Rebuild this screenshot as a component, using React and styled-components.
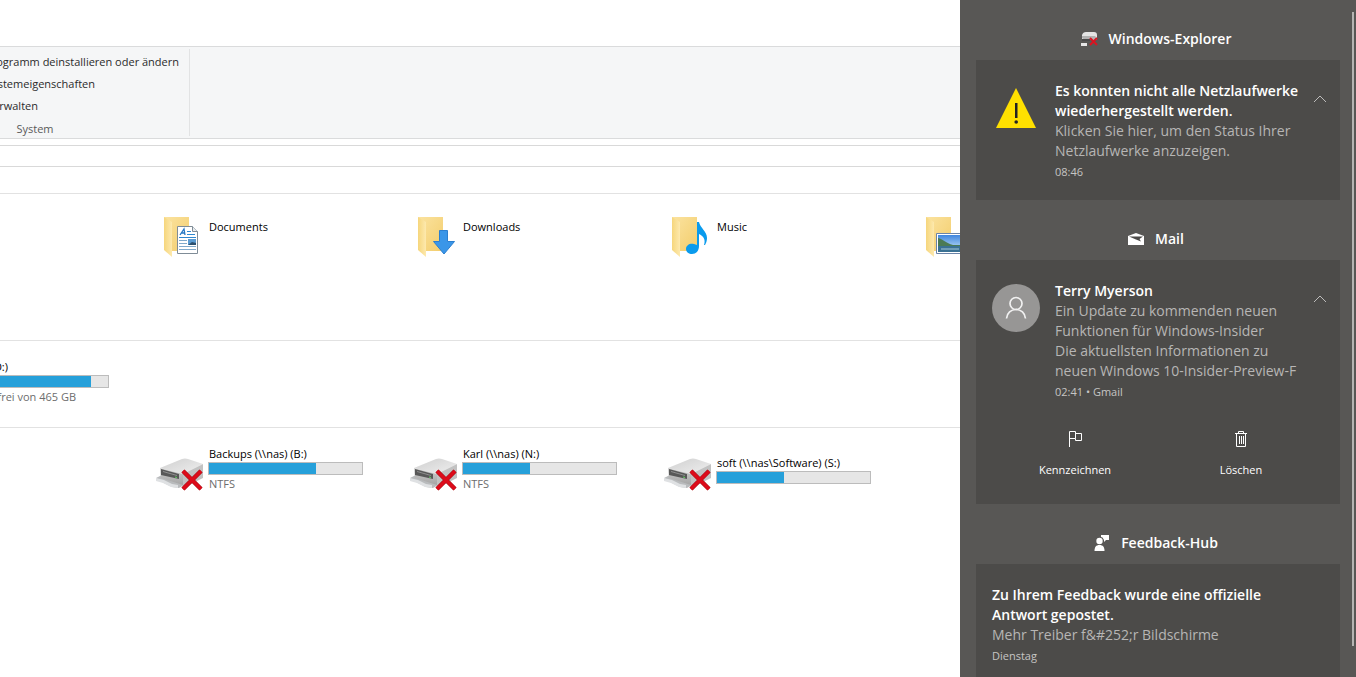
import React from 'react';
import styled, { createGlobalStyle } from 'styled-components';

const GlobalStyle = createGlobalStyle`
  * {
    box-sizing: border-box;
  }

  body {
    margin: 0;
    font-family: 'Open Sans', 'Noto Sans', sans-serif;
    font-size: 11px;
    color: #000;
    background: #fff;
  }

  h2, h3, p, ul {
    margin: 0;
    padding: 0;
    font: inherit;
    list-style: none;
  }

  svg {
    display: block;
    flex: none;
  }
`;

const Desktop = styled.div`
  display: flex;
  height: 100vh;
  overflow: hidden;
`;

/* ---------- Explorer ---------- */

const Explorer = styled.main`
  flex: 1;
  min-width: 0;
  overflow: hidden;
  background: #fff;
`;

const TabStrip = styled.div`
  height: 46px;
`;

const Ribbon = styled.div`
  height: 93px;
  padding: 2px 0;
  background: #f5f6f7;
  border-top: 1px solid #dadbdc;
  border-bottom: 1px solid #dadbdc;
`;

const RibbonGroup = styled.section`
  display: flex;
  flex-direction: column;
  width: 190px;
  height: 87px;
  padding-top: 2px;
  border-right: 1px solid #e2e3e4;
  overflow: hidden;
`;

const RibbonButton = styled.button`
  display: flex;
  justify-content: flex-end;
  width: ${(props) => props.$width}px;
  height: 22px;
  padding: 0;
  border: none;
  background: none;
  font: inherit;
  line-height: 22px;
  white-space: nowrap;
  color: #2b2b2b;
  cursor: pointer;
`;

const RibbonLabel = styled.h2`
  width: 70px;
  line-height: 24px;
  text-align: center;
  color: #5a5a5a;
`;

const AddressBar = styled.div`
  height: 22px;
  margin-top: 6px;
  border-top: 1px solid #d9d9d9;
  border-bottom: 1px solid #d9d9d9;
`;

const Content = styled.div`
  margin-top: 26px;
`;

const Group = styled.section`
  height: ${(props) => props.$height}px;
  padding-top: 16px;
  border-top: 1px solid #e2e2e2;
`;

const TileGrid = styled.ul`
  display: grid;
  grid-template-columns: 156px repeat(4, 254px);
`;

const Tile = styled.li`
  display: flex;
  align-items: ${(props) => (props.$drive ? 'center' : 'flex-start')};
  justify-content: ${(props) => (props.$cut ? 'flex-end' : 'flex-start')};
  gap: ${(props) => (props.$drive ? 2 : 3)}px;
  height: 50px;
  padding-right: ${(props) => (props.$cut ? 47 : 0)}px;
  white-space: nowrap;
`;

const TileName = styled.span`
  padding-top: 9px;
  line-height: 16px;
`;

const DriveInfo = styled.div`
  display: flex;
  flex-direction: column;
  flex: none;
  width: 155px;
`;

const DriveText = styled.div`
  padding: 0 ${(props) => props.$inset || 0}px 0 1px;
  text-align: ${(props) => (props.$inset ? 'right' : 'left')};
  line-height: ${(props) => (props.$muted ? 18 : 16)}px;
  color: ${(props) => (props.$muted ? '#6d6d6d' : '#000')};
`;

const CapacityBar = styled.div`
  height: 13px;
  border: 1px solid #bcbcbc;
  background: #e6e6e6;
`;

const CapacityFill = styled.div`
  height: 100%;
  background: #26a0da;
`;

/* ---------- Action center ---------- */

const ActionCenter = styled.aside`
  position: relative;
  display: flex;
  flex-direction: column;
  flex: none;
  width: 396px;
  padding: 0 16px;
  background: #585755;
  color: #fff;
  overflow: hidden;
`;

const ScrollThumb = styled.div`
  position: absolute;
  top: 12px;
  right: 2px;
  bottom: 31px;
  width: 2px;
  background: #b5b4b2;
`;

const AppHeader = styled.h2`
  display: flex;
  align-items: center;
  justify-content: center;
  flex: none;
  gap: 11px;
  height: 60px;
  padding: 18px 4px 0 0;
  font-size: 14px;
  font-weight: 600;
  line-height: 20px;
`;

const Card = styled.article`
  flex: ${(props) => (props.$last ? '1 0 auto' : 'none')};
  padding: 21px 14px ${(props) => props.$bottom}px 16px;
  background: #4c4b49;
`;

const CardRow = styled.div`
  display: flex;
  align-items: flex-start;
`;

const Picture = styled.div`
  display: flex;
  justify-content: center;
  width: 48px;
  margin: 3px 15px 0 0;
`;

const Message = styled.div`
  flex: 1;
  min-width: 0;
  font-size: 14px;
  line-height: 20px;
  white-space: pre;
`;

const Title = styled.h3`
  font-weight: 600;
`;

const Body = styled.p`
  color: #b7b6b5;
`;

const Meta = styled.p`
  padding-top: 1px;
  font-size: 11px;
  color: #c6c5c4;
`;

const CollapseButton = styled.button`
  display: flex;
  padding: 14px 0 0;
  border: none;
  background: none;
  color: #bdbcbb;
  cursor: pointer;
`;

const Actions = styled.div`
  display: grid;
  grid-template-columns: 1fr 1fr;
  padding: 29px 2px 0 0;
`;

const ActionButton = styled.button`
  display: flex;
  flex-direction: column;
  align-items: center;
  gap: 15px;
  padding: 0;
  border: none;
  background: none;
  font: inherit;
  line-height: 16px;
  color: #fff;
  cursor: pointer;
`;

/* ---------- Icons ---------- */

function FolderIcon({ kind }) {
  return (
    <svg width="50" height="50" viewBox="0 0 50 50">
      <defs>
        <linearGradient id="folderBack" x1="0" y1="0" x2="1" y2="1">
          <stop offset="0" stopColor="#fbe3a0" />
          <stop offset="1" stopColor="#f3cd6c" />
        </linearGradient>
        <linearGradient id="folderFront" x1="0" y1="0" x2="1" y2="0">
          <stop offset="0" stopColor="#f6d67c" />
          <stop offset="1" stopColor="#fde9ae" />
        </linearGradient>
        <linearGradient id="sky" x1="0" y1="0" x2="0" y2="1">
          <stop offset="0" stopColor="#3f86df" />
          <stop offset="1" stopColor="#d3ebf8" />
        </linearGradient>
      </defs>
      <path d="M8 7h25v34H16z" fill="url(#folderBack)" />
      <path d="M8 7l8 5v35l-8-7z" fill="url(#folderFront)" />
      {kind === 'documents' && (
        <g>
          <path d="M21.500 16.500h15l5 5v22h-20z" fill="#fff" stroke="#7f8c97" />
          <path d="M36.500 16.500v5h5" fill="#e8ecef" stroke="#7f8c97" />
          <path d="M24 25l4-6 1 6M25.500 23h3" fill="none" stroke="#2477c4" strokeWidth="1.300" />
          <path d="M31 21.500h4M31 24.500h8M23 27.500h17" stroke="#2f87cf" />
          <path d="M23 30.500h8M23 33.500h8M23 36.500h17M23 39.500h17" stroke="#7fa9cb" />
          <path d="M32 29h8v6h-8z" fill="#5a9bd2" />
          <path d="M32 35l4-3 4 1v2z" fill="#2c506f" />
        </g>
      )}
      {kind === 'downloads' && (
        <path d="M29.500 20.500h8v11h7L34 44 23.500 31.500h6z" fill="#3a96e8" stroke="#2b7fd0" />
      )}
      {kind === 'music' && (
        <path
          d="M33 12h2c1 6 8 9 8 16 0 3-1 5-2 7h-1c2-6-1-9-5-11v12c0 5-3 8-7 8-3 0-6-2-6-5 0-4 4-6 8-5l3 1z"
          fill="#0a9bed"
        />
      )}
      {kind === 'pictures' && (
        <g>
          <path d="M18.500 23.500h29v20h-29z" fill="#fff" stroke="#6b84a8" />
          <path d="M20 25h26v17H20z" fill="url(#sky)" />
          <path d="M20 28c5 1 8 5 15 7h11v2H20z" fill="#4b7a55" />
          <path d="M20 36h26v6H20z" fill="#3a7193" />
          <path d="M23 39h18" stroke="#a6c9da" />
        </g>
      )}
    </svg>
  );
}

function NetDriveIcon() {
  return (
    <svg width="50" height="50" viewBox="0 0 50 50">
      <defs>
        <linearGradient id="driveTop" x1="0" y1="0" x2="1" y2="1">
          <stop offset="0" stopColor="#cfcfcf" />
          <stop offset="1" stopColor="#f0f0f0" />
        </linearGradient>
        <linearGradient id="driveFace" x1="0" y1="0" x2="0" y2="1">
          <stop offset="0" stopColor="#cfcfcf" />
          <stop offset="1" stopColor="#a4a4a4" />
        </linearGradient>
      </defs>
      <path d="M0 34l6-3 16 6 6 4-5 3-7-1-8-4z" fill="#b9bbbd" />
      <path d="M0 34l8 2 8 4 6 1v3l-7-1-8-4-7-2z" fill="#dfe1e3" />
      <path d="M4 24l22-9q3-1 6 0l15 5-20 10z" fill="url(#driveTop)" />
      <path d="M27 30l20-10v14L27 44z" fill="#c2c2c2" />
      <path d="M4 24l23 6v11L5 34z" fill="url(#driveFace)" />
      <path d="M5 25l18 5v5L5 31z" fill="#585858" />
      <path d="M7 27.500l14 4" stroke="#8e8e8e" />
      <path d="M19 33l2 .500" stroke="#5fd35f" />
      <path d="M27 27l18 18M45 27L27 45" stroke="#a30d16" strokeWidth="4.500" />
      <path d="M27 27l18 18M45 27L27 45" stroke="#dd0b1a" strokeWidth="3.200" />
    </svg>
  );
}

function SmallDriveIcon() {
  return (
    <svg width="17" height="16" viewBox="0 0 17 16">
      <path d="M1 4q1-3 4-3h8q3 0 3 3v5H9V8H1z" fill="#e4e4e4" />
      <path d="M1 5h13l2 2v2H4L1 7z" fill="#b2b2b2" />
      <path d="M1 8h8v2H1z" fill="#4a4a4a" />
      <path d="M0 12h6v3H0z" fill="#e6e6e6" />
      <path d="M9 7l7 7M16 7l-7 7" stroke="#d81421" strokeWidth="2" />
    </svg>
  );
}

function MailIcon() {
  return (
    <svg width="16" height="16" viewBox="0 0 16 16">
      <path d="M0 5l8-3 8 3v9H0z" fill="#fff" />
      <path d="M1 5.500h14L11.500 8l1.500 2.500L8 8.500z" fill="#4c4b49" />
    </svg>
  );
}

function FeedbackIcon() {
  return (
    <svg width="16" height="18" viewBox="0 0 16 18">
      <circle cx="5.500" cy="7" r="3.200" fill="#fff" />
      <path d="M.5 17c0-4 1.500-6 5-6s5 2 5 6z" fill="#fff" />
      <path d="M7 1h8v5h-3l-2 2V6L8.500 3.500 7 3z" fill="#fff" />
    </svg>
  );
}

function WarningIcon() {
  return (
    <svg width="40" height="48" viewBox="0 0 40 48">
      <path d="M20 4l20 40H0z" fill="#ffe000" />
      <path d="M19 19h2.500v15H19z" fill="#222" />
      <circle cx="20.200" cy="38" r="1.800" fill="#222" />
    </svg>
  );
}

function AvatarIcon() {
  return (
    <svg width="48" height="48" viewBox="0 0 48 48">
      <circle cx="24" cy="24" r="24" fill="#979695" />
      <g fill="none" stroke="#f1f1f1" strokeWidth="1.700">
        <circle cx="24" cy="19.500" r="6" />
        <path d="M14.500 34.500c.5-5.500 4.500-9 9.500-9s9 3.500 9.500 9" />
      </g>
    </svg>
  );
}

function ChevronIcon() {
  return (
    <svg width="12" height="8" viewBox="0 0 12 8">
      <path d="M0 7l6-6 6 6" fill="none" stroke="currentColor" />
    </svg>
  );
}

function FlagIcon() {
  return (
    <svg width="16" height="16" viewBox="0 0 16 16">
      <path d="M2.500 16V.5h6v7h-6M8.500 2.500h6v7h-6v-2" fill="none" stroke="#fff" />
    </svg>
  );
}

function TrashIcon() {
  return (
    <svg width="16" height="16" viewBox="0 0 16 16">
      <path
        d="M2 2.500h12M5.500 2.500v-2h5v2M3.500 2.500v13h9v-13M6.500 5v8M8.500 5v8M10.500 5v8"
        fill="none"
        stroke="#fff"
      />
    </svg>
  );
}

/* ---------- Data ---------- */

const ribbonCommands = [
  { label: 'ogramm deinstallieren oder ändern', width: 179 },
  { label: 'stemeigenschaften', width: 95 },
  { label: 'rwalten', width: 38 },
];

const folders = [
  { name: 'Documents', kind: 'documents' },
  { name: 'Downloads', kind: 'downloads' },
  { name: 'Music', kind: 'music' },
  { name: '', kind: 'pictures' },
];

const netDrives = [
  { name: 'Backups (\\\\nas) (B:)', used: 70, fs: 'NTFS' },
  { name: 'Karl (\\\\nas) (N:)', used: 44, fs: 'NTFS' },
  { name: 'soft (\\\\nas\\Software) (S:)', used: 44 },
];

function Capacity({ used }) {
  return (
    <CapacityBar>
      <CapacityFill style={{ width: `${used}%` }} />
    </CapacityBar>
  );
}

function Notification({
  picture, title, body, meta, collapsible, actions, bottom, last,
}) {
  return (
    <Card $bottom={bottom} $last={last}>
      <CardRow>
        {picture && <Picture>{picture}</Picture>}
        <Message>
          <Title>{title}</Title>
          <Body>{body}</Body>
          <Meta>{meta}</Meta>
        </Message>
        {collapsible && (
          <CollapseButton type="button" aria-label="Reduzieren">
            <ChevronIcon />
          </CollapseButton>
        )}
      </CardRow>
      {actions && <Actions>{actions}</Actions>}
    </Card>
  );
}

function App() {
  return (
    <Desktop>
      <GlobalStyle />
      <Explorer>
        <TabStrip />
        <Ribbon>
          <RibbonGroup>
            {ribbonCommands.map((command) => (
              <RibbonButton key={command.label} type="button" $width={command.width}>
                {command.label}
              </RibbonButton>
            ))}
            <RibbonLabel>System</RibbonLabel>
          </RibbonGroup>
        </Ribbon>
        <AddressBar />
        <Content>
          <Group $height={147}>
            <TileGrid>
              <li />
              {folders.map((folder) => (
                <Tile key={folder.kind}>
                  <FolderIcon kind={folder.kind} />
                  <TileName>{folder.name}</TileName>
                </Tile>
              ))}
            </TileGrid>
          </Group>
          <Group $height={87}>
            <TileGrid>
              <Tile $cut $drive>
                <DriveInfo>
                  <DriveText $inset={101}>D:)</DriveText>
                  <Capacity used={89} />
                  <DriveText $muted $inset={33}>frei von 465 GB</DriveText>
                </DriveInfo>
              </Tile>
            </TileGrid>
          </Group>
          <Group $height={87}>
            <TileGrid>
              <li />
              {netDrives.map((drive) => (
                <Tile key={drive.name} $drive>
                  <NetDriveIcon />
                  <DriveInfo>
                    <DriveText>{drive.name}</DriveText>
                    <Capacity used={drive.used} />
                    {drive.fs && <DriveText $muted>{drive.fs}</DriveText>}
                  </DriveInfo>
                </Tile>
              ))}
            </TileGrid>
          </Group>
        </Content>
      </Explorer>

      <ActionCenter>
        <AppHeader>
          <SmallDriveIcon />
          Windows-Explorer
        </AppHeader>
        <Notification
          picture={<WarningIcon />}
          title={'Es konnten nicht alle Netzlaufwerke\nwiederhergestellt werden.'}
          body={'Klicken Sie hier, um den Status Ihrer\nNetzlaufwerke anzuzeigen.'}
          meta="08:46"
          collapsible
          bottom={18}
        />

        <AppHeader>
          <MailIcon />
          Mail
        </AppHeader>
        <Notification
          picture={<AvatarIcon />}
          title="Terry Myerson"
          body={'Ein Update zu kommenden neuen\nFunktionen für Windows-Insider\nDie aktuellsten Informationen zu\nneuen Windows 10-Insider-Preview-F'}
          meta="02:41 • Gmail"
          collapsible
          bottom={26}
          actions={(
            <>
              <ActionButton type="button">
                <FlagIcon />
                Kennzeichnen
              </ActionButton>
              <ActionButton type="button">
                <TrashIcon />
                Löschen
              </ActionButton>
            </>
          )}
        />

        <AppHeader>
          <FeedbackIcon />
          Feedback-Hub
        </AppHeader>
        <Notification
          title={'Zu Ihrem Feedback wurde eine offizielle\nAntwort gepostet.'}
          body="Mehr Treiber f&amp;#252;r Bildschirme"
          meta="Dienstag"
          bottom={18}
          last
        />
        <ScrollThumb />
      </ActionCenter>
    </Desktop>
  );
}

export default App;
